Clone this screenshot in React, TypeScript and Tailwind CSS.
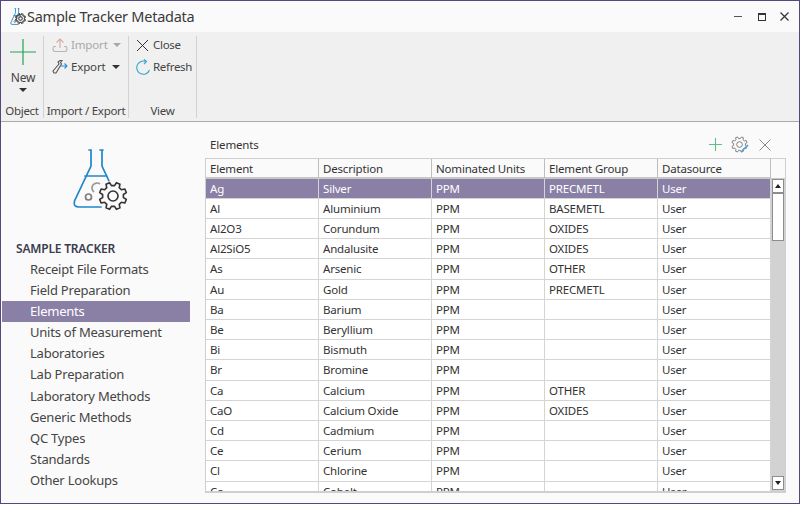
const font = "font-['Noto_Sans','Open_Sans',sans-serif]"

const navItems = [
  "Receipt File Formats",
  "Field Preparation",
  "Elements",
  "Units of Measurement",
  "Laboratories",
  "Lab Preparation",
  "Laboratory Methods",
  "Generic Methods",
  "QC Types",
  "Standards",
  "Other Lookups",
]

const rows = [
  ["Ag", "Silver", "PPM", "PRECMETL", "User"],
  ["Al", "Aluminium", "PPM", "BASEMETL", "User"],
  ["Al2O3", "Corundum", "PPM", "OXIDES", "User"],
  ["Al2SiO5", "Andalusite", "PPM", "OXIDES", "User"],
  ["As", "Arsenic", "PPM", "OTHER", "User"],
  ["Au", "Gold", "PPM", "PRECMETL", "User"],
  ["Ba", "Barium", "PPM", "", "User"],
  ["Be", "Beryllium", "PPM", "", "User"],
  ["Bi", "Bismuth", "PPM", "", "User"],
  ["Br", "Bromine", "PPM", "", "User"],
  ["Ca", "Calcium", "PPM", "OTHER", "User"],
  ["CaO", "Calcium Oxide", "PPM", "OXIDES", "User"],
  ["Cd", "Cadmium", "PPM", "", "User"],
  ["Ce", "Cerium", "PPM", "", "User"],
  ["Cl", "Chlorine", "PPM", "", "User"],
  ["Co", "Cobalt", "PPM", "", "User"],
]

const headers = ["Element", "Description", "Nominated Units", "Element Group", "Datasource"]

// eight toothed gear outline, computed so the teeth stay even
const gearPath = (() => {
  const pt = (r: number, deg: number) => {
    const a = (deg * Math.PI) / 180
    return `${(12 + r * Math.cos(a)).toFixed(2)} ${(12 + r * Math.sin(a)).toFixed(2)}`
  }
  let d = ""
  for (let k = 0; k < 8; k++) {
    const a = k * 45 + 22.5
    d += `${k === 0 ? "M" : "L"}${pt(8.4, a - 14)} L${pt(11, a - 8)} L${pt(11, a + 8)} L${pt(8.4, a + 14)} `
  }
  return d + "Z"
})()

function Gear({ size, color, stroke = 1.5 }: { size: number; color: string; stroke?: number }) {
  return (
    <svg width={size} height={size} viewBox="0 0 24 24" fill="none" stroke={color} strokeWidth={stroke} strokeLinejoin="round">
      <path d={gearPath} />
      <circle cx="12" cy="12" r="4" />
    </svg>
  )
}

function Flask({ width, height, stroke = 1.7 }: { width: number; height: number; stroke?: number }) {
  return (
    <svg width={width} height={height} viewBox="0 0 40 60" fill="none">
      <path
        d="M18 1 H20 V17 L3.5 52 Q2 58 8 58 H30 M29 1 H32 M31 1 V17 L38 32 M14 27 H36"
        stroke="#1f86cc"
        strokeWidth={stroke}
        strokeLinecap="round"
      />
      <circle cx="17.5" cy="48" r="3" stroke="#7d7d7d" strokeWidth={stroke} />
      <path d="M23 43 A5 5 0 0 1 29 35" stroke="#9a9a9a" strokeWidth={stroke} />
    </svg>
  )
}

function RibbonGroup({ label, width, children }: { label: string; width: string; children: React.ReactNode }) {
  return (
    <div className={`${width} h-[82px] mt-[4px] flex flex-col border-r border-[#d2d2d2]`}>
      <div className="flex-1 min-h-0">{children}</div>
      <div className="h-[17px] text-center whitespace-nowrap text-[11.5px] leading-[19px] tracking-[-0.3px] text-[#444]">{label}</div>
    </div>
  )
}

function Caret({ color = "#333" }: { color?: string }) {
  return <span className="inline-block w-0 h-0 border-x-[4px] border-x-transparent border-t-[4px]" style={{ borderTopColor: color }} />
}

export default function App() {
  return (
    <div className={`${font} w-[800px] h-[504px] overflow-hidden bg-[#fafafa] border border-[#54487f] flex flex-col`}>
      {/* Title bar */}
      <div className="h-[31px] shrink-0 flex items-center">
        <div className="ml-[8px] relative w-[18px] h-[18px]">
          <Flask width={13} height={17} stroke={3} />
          <div className="absolute left-[6px] top-[5px]">
            <Gear size={11} color="#333" stroke={2.2} />
          </div>
        </div>
        <span className="ml-[0px] text-[14.5px] leading-none text-[#3b3b3b] tracking-[-0.25px]">Sample Tracker Metadata</span>
        <div className="ml-auto flex items-center">
          <div className="w-[8px] h-px bg-[#555] mr-[16px]" />
          <div className="w-[8px] h-[8px] border border-[#333] border-t-2 mr-[14px]" />
          <svg width="9" height="9" viewBox="0 0 9 9" className="mr-[10px]" stroke="#333" strokeWidth="1.2">
            <path d="M0.5 0.5 L8.5 8.5 M8.5 0.5 L0.5 8.5" />
          </svg>
        </div>
      </div>

      {/* Ribbon */}
      <div className="h-[90px] shrink-0 bg-[#f0f0f0] border-b border-[#a9a9a9] flex">
        <RibbonGroup label="Object" width="w-[43px]">
          <div className="flex flex-col items-center text-[12px] text-[#444]">
            <svg width="28" height="28" viewBox="0 0 28 28" className="mt-[2px] ml-[2px]" stroke="#22a454" strokeWidth="1.2">
              <path d="M14 1 V27 M1 14 H27" />
            </svg>
            <span className="leading-[16px] mt-[4px] ml-[2px] tracking-[-0.2px]">New</span>
            <span className="mt-[2px] ml-[2px] flex"><Caret /></span>
          </div>
        </RibbonGroup>
        <RibbonGroup label="Import / Export" width="w-[85px]">
          <div className="text-[11.5px] tracking-[-0.15px] pl-[8px] -mt-[2px]">
            <div className="h-[22px] flex items-center text-[#a8a8a8]">
              <svg width="16" height="16" viewBox="0 0 16 16" fill="none" stroke="#d9a9a2" strokeWidth="1.1">
                <path d="M8 11 V2 M4.5 5.5 L8 2 L11.5 5.5" />
                <path d="M4 9.5 H2 Q1 10 1 12 Q1 14.5 3 14.5 H13 Q15 14.5 15 12 Q15 10 14 9.5 H12" stroke="#b5b5b5" />
              </svg>
              <span className="ml-[3px]">Import</span>
              <span className="ml-[5px] flex"><Caret color="#a8a8a8" /></span>
            </div>
            <div className="h-[22px] flex items-center text-[#444]">
              <svg width="16" height="16" viewBox="0 0 16 16" fill="none" strokeWidth="1.1">
                <path d="M2 14 L1 12 L7 5 L6 3 L8 1.5 H10 L8.5 3.5 L9.5 5 L4 14 Z" stroke="#555" />
                <path d="M8 7 H15 M12.5 4.5 L15 7 L12.5 9.5" stroke="#2f8fd8" />
              </svg>
              <span className="ml-[3px]">Export</span>
              <span className="ml-[6px] flex"><Caret /></span>
            </div>
          </div>
        </RibbonGroup>
        <RibbonGroup label="View" width="w-[68px]">
          <div className="text-[11.5px] tracking-[-0.3px] text-[#444] pl-[6px] -mt-[2px]">
            <div className="h-[22px] flex items-center">
              <svg width="13" height="13" viewBox="0 0 13 13" className="ml-[1px] mr-[4px]" stroke="#333" strokeWidth="1">
                <path d="M1 1 L12 12 M12 1 L1 12" />
              </svg>
              Close
            </div>
            <div className="h-[22px] flex items-center">
              <svg width="17" height="17" viewBox="0 0 17 17" className="mr-[1px]" fill="none" stroke="#2ba6c9" strokeWidth="1.1">
                <path d="M14.5 11 A6.6 6.6 0 1 1 10.5 2.4" />
                <path d="M9 0.5 L11.5 2.6 L9 5" />
              </svg>
              Refresh
            </div>
          </div>
        </RibbonGroup>
      </div>

      {/* Body */}
      <div className="flex flex-1 min-h-0">
        <aside className="w-[204px] shrink-0 flex flex-col">
          <div className="h-[105px] ml-[70px] pt-[27px] relative">
            <Flask width={40} height={60} />
            <div className="absolute left-[27px] top-[59px]">
              <div className="bg-[#fafafa] rounded-full">
                <Gear size={30} color="#333" stroke={1.3} />
              </div>
            </div>
          </div>
          <div className="ml-[15px] mt-[11px] h-[21px] text-[12px] leading-[21px] font-semibold text-[#3c3c50] tracking-[-0.2px]">SAMPLE TRACKER</div>
          <nav className="flex flex-col">
            {navItems.map((item) =>
              <div
                key={item}
                className={`h-[21.1px] w-[188px] ml-[1px] pl-[28px] text-[13px] leading-[20px] tracking-[-0.22px] ${
                  item === "Elements" ? "bg-[#8a80a6] text-white" : "text-[#454545]"
                }`}
              >
                {item}
              </div>
            )}
          </nav>
        </aside>

        <main className="flex-1 min-w-0 flex flex-col">
          <div className="h-[36px] shrink-0 flex items-center pr-[28px] pt-[9px]">
            <span className="ml-[5px] text-[11.5px] tracking-[-0.15px] text-[#333]">Elements</span>
            <div className="ml-auto flex items-center">
              <svg width="13" height="13" viewBox="0 0 13 13" stroke="#5fc08a" strokeWidth="1.1">
                <path d="M6.5 0 V13 M0 6.5 H13" />
              </svg>
              <div className="ml-[9px] relative w-[17px] h-[17px]">
                <Gear size={17} color="#777" stroke={1.3} />
                <svg width="9" height="9" viewBox="0 0 9 9" className="absolute right-[-1px] bottom-0" stroke="#49a6e0" strokeWidth="1.6">
                  <path d="M1 8 L8 1" />
                </svg>
              </div>
              <svg width="12" height="12" viewBox="0 0 12 12" className="ml-[11px]" stroke="#888" strokeWidth="1">
                <path d="M0.5 0.5 L11.5 11.5 M11.5 0.5 L0.5 11.5" />
              </svg>
            </div>
          </div>

          {/* Grid */}
          <div className="w-[581px] h-[335px] border-2 border-[#cfcfcf] border-r-[1px] border-t-[1px] border-l-[1px] flex overflow-hidden bg-white text-[11.5px] text-[#333] tracking-[-0.18px]">
            <div className="w-[565px] shrink-0 overflow-hidden">
              <div className="h-[19.7px] grid grid-cols-[113px_113px_113px_113px_113px] border-b-2 border-[#c8c8c8] bg-[#fafafa]">
                {headers.map((h) => (
                  <div key={h} className="pl-[4px] border-r border-[#bdbdbd] leading-[19px]">{h}</div>
                ))}
              </div>
              {rows.map((row, i) => (
                <div
                  key={row[0]}
                  className={`h-[20.2px] grid grid-cols-[113px_113px_113px_113px_113px] border-b border-[#d4d4d4] ${
                    i === 0 ? "bg-[#8a80a6] text-white" : ""
                  }`}
                >
                  {row.map((cell, c) => (
                    <div key={c} className="pl-[4px] border-r border-[#d4d4d4] leading-[19px]">{cell}</div>
                  ))}
                </div>
              ))}
            </div>
            <div className="flex-1 flex flex-col bg-[#d2d2d2]">
              <div className="h-[20px] shrink-0 bg-[#fafafa] border-b border-[#c8c8c8]" />
              <div className="h-[14px] shrink-0 mx-px bg-white border border-[#8d8d8d] flex items-center justify-center">
                <span className="w-0 h-0 border-x-[3px] border-x-transparent border-b-[4px] border-b-[#222]" />
              </div>
              <div className="h-[48px] shrink-0 mx-px bg-white border border-[#8d8d8d]" />
              <div className="mt-auto h-[14px] shrink-0 mx-px mb-px bg-white border border-[#8d8d8d] flex items-center justify-center">
                <span className="w-0 h-0 border-x-[3px] border-x-transparent border-t-[4px] border-t-[#222]" />
              </div>
            </div>
          </div>
        </main>
      </div>
    </div>
  )
}
